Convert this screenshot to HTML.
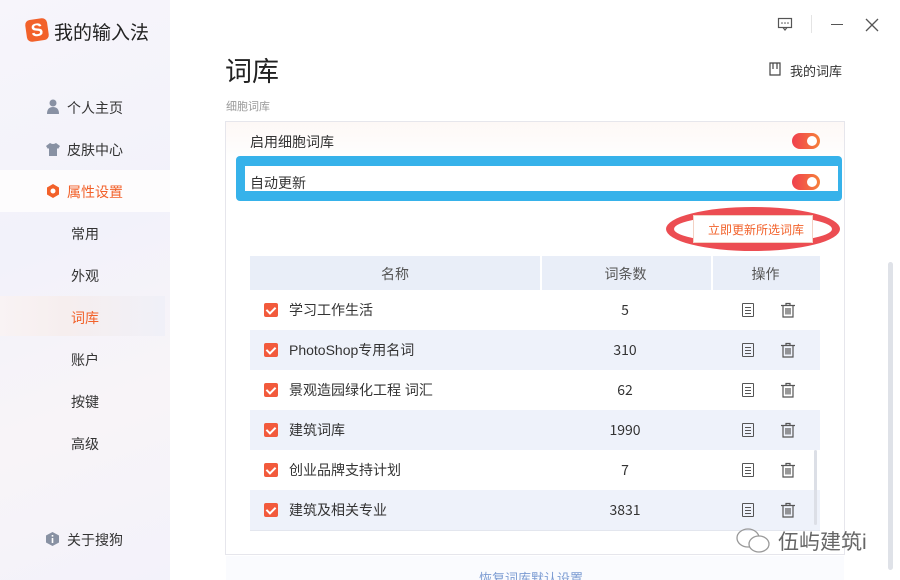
<!DOCTYPE html>
<html><head><meta charset="utf-8"><style>
*{margin:0;padding:0;box-sizing:border-box}
html,body{width:900px;height:580px;overflow:hidden}
body{background:#fafbfe;font-family:"Liberation Sans","Noto Sans CJK SC",sans-serif;position:relative;color:#333}
.side{position:absolute;left:0;top:0;width:170px;height:580px;background:linear-gradient(160deg,#f7f5fb 0%,#f2f2fa 40%,#f8f4f8 70%,#f3f2fa 100%)}
.abs{position:absolute}
.nav{position:absolute;font-size:14px;color:#333}
.main{position:absolute;left:170px;top:0;width:730px;height:580px;background:#fff}
.row{position:absolute;left:250px;width:570px;height:40px;font-size:14px;line-height:18px}
.row.alt{background:#eef2fa}
.cb{position:absolute;left:14px;top:13px;width:14px;height:14px;background:#f25a3c;border-radius:2px}
.cb:after{content:"";position:absolute;left:4px;top:2px;width:4px;height:7px;border:solid #fff;border-width:0 2px 2px 0;transform:rotate(45deg)}
.nm{position:absolute;left:39px;top:11px}
.ct{position:absolute;left:290px;width:170px;text-align:center;top:11px;font-family:"Noto Sans CJK SC",sans-serif}
.ic1{position:absolute;left:492px;top:13px;width:12px;height:14px;border:1.3px solid #555;border-radius:1px}
.ic1 i{position:absolute;left:2px;width:6px;height:1.3px;background:#555}
.tog{position:absolute;width:28px;height:16px;border-radius:8px;background:linear-gradient(90deg,#f0404e,#f6803a)}
.tog:after{content:"";position:absolute;right:3px;top:3px;width:10px;height:10px;border-radius:50%;background:#fff}
</style></head><body>
<div class="side">
 <div class="abs" style="left:26px;top:19px;width:22px;height:22px;background:#f2612a;border-radius:5px;transform:rotate(-8deg);color:#fff;font-weight:bold;font-size:18px;line-height:22px;text-align:center">S</div>
 <div class="abs" style="left:54px;top:18px;font-size:19px;color:#222">我的输入法</div>
 <svg class="abs" style="left:46px;top:99px" width="14" height="15"><circle cx="7" cy="4" r="3.5" fill="#8891a3"/><path d="M1 15 Q1 8 7 8 Q13 8 13 15Z" fill="#8891a3"/></svg>
 <div class="nav" style="left:67px;top:98px">个人主页</div>
 <svg class="abs" style="left:45px;top:142px" width="16" height="14"><path d="M5 1 L1 4 L3 7 L4 6 L4 14 L12 14 L12 6 L13 7 L15 4 L11 1 Q8 3 5 1Z" fill="#8891a3"/></svg>
 <div class="nav" style="left:67px;top:140px">皮肤中心</div>
 <div class="abs" style="left:0;top:170px;width:170px;height:42px;background:#fdfcfd"></div>
 <svg class="abs" style="left:45px;top:183px" width="16" height="16"><path d="M8 1 L14 4.5 L14 11.5 L8 15 L2 11.5 L2 4.5Z" fill="#f2612a"/><circle cx="8" cy="8" r="2.5" fill="#fff"/></svg>
 <div class="nav" style="left:67px;top:182px;color:#f2612a">属性设置</div>
 <div class="nav" style="left:71px;top:224px">常用</div>
 <div class="nav" style="left:71px;top:266px">外观</div>
 <div class="abs" style="left:0;top:296px;width:165px;height:40px;background:linear-gradient(90deg,#f9f3f4,#f6eeee 40%,#f0f0f8)"></div>
 <div class="nav" style="left:71px;top:308px;color:#f2612a">词库</div>
 <div class="nav" style="left:71px;top:350px">账户</div>
 <div class="nav" style="left:71px;top:392px">按键</div>
 <div class="nav" style="left:71px;top:434px">高级</div>
 <svg class="abs" style="left:45px;top:531px" width="15" height="16"><path d="M7.5 1 L14 4.5 L14 11.5 L7.5 15 L1 11.5 L1 4.5Z" fill="#8891a3"/><rect x="6.7" y="7" width="1.6" height="5" fill="#fff"/><rect x="6.7" y="4" width="1.6" height="1.6" fill="#fff"/></svg>
 <div class="nav" style="left:67px;top:530px">关于搜狗</div>
</div>
<div class="main"></div>
<svg class="abs" style="left:777px;top:16px" width="16" height="16"><rect x="1.5" y="2.5" width="13" height="9" fill="none" stroke="#555" stroke-width="1.2"/><path d="M6 11.5 L8 14 L10 11.5" fill="none" stroke="#555" stroke-width="1.2"/><circle cx="5" cy="7" r=".8" fill="#555"/><circle cx="8" cy="7" r=".8" fill="#555"/><circle cx="11" cy="7" r=".8" fill="#555"/></svg>
<div class="abs" style="left:811px;top:15px;width:1px;height:18px;background:#e4e4e4"></div>
<div class="abs" style="left:831px;top:24px;width:12px;height:1.3px;background:#555"></div>
<svg class="abs" style="left:865px;top:18px" width="14" height="14"><path d="M1 1 L13 13 M13 1 L1 13" stroke="#555" stroke-width="1.3"/></svg>
<div class="abs" style="left:225px;top:50px;font-size:27px;color:#222">词库</div>
<div class="abs" style="left:226px;top:98px;font-size:11px;color:#999">细胞词库</div>
<svg class="abs" style="left:769px;top:62px" width="12" height="14"><path d="M1 1 H11 V13 H1Z M4 1 V7 M8 1 V7" fill="none" stroke="#444" stroke-width="1.2"/></svg>
<div class="abs" style="left:790px;top:61px;font-size:13px;color:#333">我的词库</div>
<div class="abs" style="left:225px;top:121px;width:620px;height:434px;border:1px solid #e6e6ec;background:#fff"></div>
<div class="abs" style="left:226px;top:122px;width:618px;height:40px;background:linear-gradient(#fdf8f6,#fff)"></div>
<div class="abs" style="left:250px;top:132px;font-size:14px">启用细胞词库</div>
<div class="tog" style="left:792px;top:133px"></div>
<div class="abs" style="left:236px;top:156px;width:606px;height:45px;background:#36b2ea;border-radius:4px"></div>
<div class="abs" style="left:245px;top:166px;width:593px;height:25px;background:#fff"></div>
<div class="abs" style="left:250px;top:173px;font-size:14px">自动更新</div>
<div class="tog" style="left:792px;top:174px"></div>
<div class="abs" style="left:666px;top:207px;width:174px;height:44px;border:8px solid #ec4d52;border-radius:50%"></div>
<div class="abs" style="left:693px;top:215px;width:120px;height:28px;border:1px solid #f3d2c4;background:#fff"></div>
<div class="abs" style="left:708px;top:221px;font-size:12px;color:#f2612a">立即更新所选词库</div>
<div class="abs" style="left:250px;top:256px;width:570px;height:34px;background:#e9eef8;font-size:14px;color:#555">
 <div class="abs" style="left:290px;top:0;width:2px;height:34px;background:#fff"></div>
 <div class="abs" style="left:461px;top:0;width:2px;height:34px;background:#fff"></div>
 <div class="abs" style="left:0;width:290px;text-align:center;top:8px">名称</div>
 <div class="abs" style="left:290px;width:171px;text-align:center;top:8px">词条数</div>
 <div class="abs" style="left:461px;width:109px;text-align:center;top:8px">操作</div>
</div>
<div class="row" style="top:290px"><div class="cb"></div><div class="nm">学习工作生活</div><div class="ct">5</div><div class="ic1"><i style="top:3px"></i><i style="top:6px"></i><i style="top:9px"></i></div><svg class="abs" style="left:530px;top:12px" width="16" height="16"><path d="M1 3.5 H15 M6 3.5 V1.5 H10 V3.5 M3 3.5 V15 H13 V3.5 M6 6 V12.5 M8 6 V12.5 M10 6 V12.5" fill="none" stroke="#555" stroke-width="1.2"/></svg></div>
<div class="row alt" style="top:330px"><div class="cb"></div><div class="nm">PhotoShop专用名词</div><div class="ct">310</div><div class="ic1"><i style="top:3px"></i><i style="top:6px"></i><i style="top:9px"></i></div><svg class="abs" style="left:530px;top:12px" width="16" height="16"><path d="M1 3.5 H15 M6 3.5 V1.5 H10 V3.5 M3 3.5 V15 H13 V3.5 M6 6 V12.5 M8 6 V12.5 M10 6 V12.5" fill="none" stroke="#555" stroke-width="1.2"/></svg></div>
<div class="row" style="top:370px"><div class="cb"></div><div class="nm">景观造园绿化工程 词汇</div><div class="ct">62</div><div class="ic1"><i style="top:3px"></i><i style="top:6px"></i><i style="top:9px"></i></div><svg class="abs" style="left:530px;top:12px" width="16" height="16"><path d="M1 3.5 H15 M6 3.5 V1.5 H10 V3.5 M3 3.5 V15 H13 V3.5 M6 6 V12.5 M8 6 V12.5 M10 6 V12.5" fill="none" stroke="#555" stroke-width="1.2"/></svg></div>
<div class="row alt" style="top:410px"><div class="cb"></div><div class="nm">建筑词库</div><div class="ct">1990</div><div class="ic1"><i style="top:3px"></i><i style="top:6px"></i><i style="top:9px"></i></div><svg class="abs" style="left:530px;top:12px" width="16" height="16"><path d="M1 3.5 H15 M6 3.5 V1.5 H10 V3.5 M3 3.5 V15 H13 V3.5 M6 6 V12.5 M8 6 V12.5 M10 6 V12.5" fill="none" stroke="#555" stroke-width="1.2"/></svg></div>
<div class="row" style="top:450px"><div class="cb"></div><div class="nm">创业品牌支持计划</div><div class="ct">7</div><div class="ic1"><i style="top:3px"></i><i style="top:6px"></i><i style="top:9px"></i></div><svg class="abs" style="left:530px;top:12px" width="16" height="16"><path d="M1 3.5 H15 M6 3.5 V1.5 H10 V3.5 M3 3.5 V15 H13 V3.5 M6 6 V12.5 M8 6 V12.5 M10 6 V12.5" fill="none" stroke="#555" stroke-width="1.2"/></svg></div>
<div class="row alt" style="top:490px"><div class="cb"></div><div class="nm">建筑及相关专业</div><div class="ct">3831</div><div class="ic1"><i style="top:3px"></i><i style="top:6px"></i><i style="top:9px"></i></div><svg class="abs" style="left:530px;top:12px" width="16" height="16"><path d="M1 3.5 H15 M6 3.5 V1.5 H10 V3.5 M3 3.5 V15 H13 V3.5 M6 6 V12.5 M8 6 V12.5 M10 6 V12.5" fill="none" stroke="#555" stroke-width="1.2"/></svg></div>
<div class="abs" style="left:250px;top:530px;width:570px;height:1px;background:#e3e6ee"></div>
<div class="abs" style="left:814px;top:450px;width:3px;height:75px;background:#dcdfe6;border-radius:2px"></div>
<div class="abs" style="left:888px;top:262px;width:5px;height:308px;background:#dfe2e8;border-radius:3px"></div>
<div class="abs" style="left:226px;top:556px;width:618px;height:24px;background:#fafbfe"></div>
<div class="abs" style="left:479px;top:568px;font-size:13px;color:#7b9bd2">恢复词库默认设置</div>
<svg class="abs" style="left:735px;top:527px" width="36" height="28"><ellipse cx="13" cy="11" rx="11" ry="9" fill="none" stroke="#999" stroke-width="1.3"/><ellipse cx="24" cy="17" rx="10" ry="8" fill="#fff" stroke="#999" stroke-width="1.3"/></svg>
<div class="abs" style="left:778px;top:526px;font-size:21px;color:#666">伍屿建筑i</div>
</body></html>
